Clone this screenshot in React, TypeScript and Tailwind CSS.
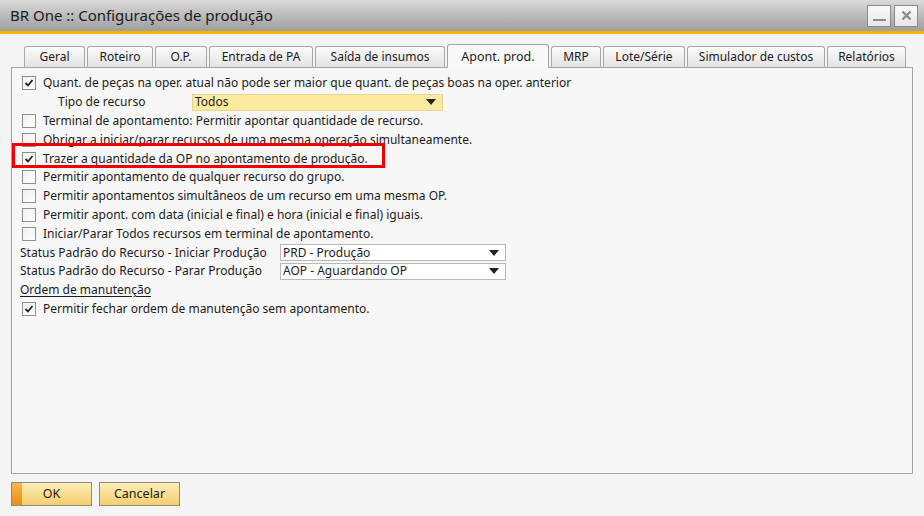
import React from "react";

const font = { fontFamily: '"Noto Sans", "Open Sans", sans-serif' };

function Check({ checked }: { checked?: boolean }) {
  return (
    <span className="flex h-[14px] w-[14px] shrink-0 items-center justify-center border border-[#8e8f8f] bg-gradient-to-br from-[#f0f0f0] to-white">
      {checked && (
        <svg width="10" height="10" viewBox="0 0 10 10">
          <path d="M1.5 5 L4 7.5 L8.5 2" fill="none" stroke="#222" strokeWidth="1.8" />
        </svg>
      )}
    </span>
  );
}

function Row({ checked, children }: { checked?: boolean; children: React.ReactNode }) {
  return (
    <div className="flex h-[18.8px] items-center gap-[7px] pl-[10px]">
      <Check checked={checked} />
      <span className="whitespace-nowrap">{children}</span>
    </div>
  );
}

function Combo({ value, width, yellow }: { value: string; width: string; yellow?: boolean }) {
  return (
    <div
      className={`flex h-[17px] shrink-0 items-center justify-between border pl-[2px] pr-[6px] ${width} ${
        yellow ? "border-[#e8d68c] bg-[#fcea9f]" : "border-[#b9b9b9] bg-white"
      }`}
    >
      <span>{value}</span>
      <svg width="10" height="6" viewBox="0 0 10 6">
        <path d="M0 0 H10 L5 6 Z" fill="#222" />
      </svg>
    </div>
  );
}

const tabs = [
  { label: "Geral", w: "w-[61px]" },
  { label: "Roteiro", w: "w-[66px]" },
  { label: "O.P.", w: "w-[52px]" },
  { label: "Entrada de PA", w: "w-[104px]" },
  { label: "Saída de insumos", w: "w-[130px]" },
  { label: "Apont. prod.", w: "w-[102px]", active: true },
  { label: "MRP", w: "w-[50px]" },
  { label: "Lote/Série", w: "w-[82px]" },
  { label: "Simulador de custos", w: "w-[138px]" },
  { label: "Relatórios", w: "w-[79px]" },
];

export default function App() {
  return (
    <div className="flex h-[516px] w-[924px] flex-col bg-[#f4f4f4] text-[12px] text-[#1c1c1c]" style={font}>
      {/* title bar */}
      <div className="flex h-[31px] items-center justify-between bg-gradient-to-b from-[#dadada] to-[#9e9e9e] pl-[10px] pr-[6px]">
        <span className="text-[15px] text-[#1a1a1a]">BR One :: Configurações de produção</span>
        <div className="flex gap-[3px]">
          <div className="flex h-[22px] w-[24px] items-end justify-center border border-[#8a8a8a] bg-gradient-to-b from-[#fbfbfb] to-[#e6e6e6] pb-[5px]">
            <span className="block h-[2px] w-[13px] bg-[#8c8c8c]" />
          </div>
          <div className="flex h-[22px] w-[24px] items-center justify-center border border-[#8a8a8a] bg-gradient-to-b from-[#fbfbfb] to-[#e6e6e6]">
            <svg width="11" height="11" viewBox="0 0 11 11">
              <path d="M1.5 1.5 L9.5 9.5 M9.5 1.5 L1.5 9.5" stroke="#8c8c8c" strokeWidth="2.4" />
            </svg>
          </div>
        </div>
      </div>
      <div className="h-[3px] bg-[#f4b400]" />

      <div className="flex flex-1 flex-col px-[11px] pt-[10px]">
        {/* tabs */}
        <div className="relative z-10 flex h-[23px] items-end gap-[2px] pl-[13px]">
          {tabs.map((t) =>
            t.active ? (
              <div
                key={t.label}
                className={`flex h-[24px] ${t.w} mb-[-1px] items-center justify-center rounded-t-[3px] border border-b-0 border-[#a3a3a3] bg-[#f8f8f8] pt-[1px] text-[12.5px]`}
              >
                {t.label}
              </div>
            ) : (
              <div
                key={t.label}
                className={`flex h-[21px] ${t.w} items-center justify-center rounded-t-[3px] border border-b-0 border-[#a8a8a8] bg-gradient-to-b from-[#fbfbfb] to-[#e3e3e3]`}
              >
                {t.label}
              </div>
            )
          )}
        </div>

        {/* panel */}
        <div className="flex h-[407px] flex-col border border-[#a3a3a3] bg-[#f7f7f7] pt-[6px]">
          <Row checked>Quant. de peças na oper. atual não pode ser maior que quant. de peças boas na oper. anterior</Row>
          <div className="flex h-[18.8px] items-center pl-[46px]">
            <span className="w-[134px] shrink-0">Tipo de recurso</span>
            <Combo value="Todos" width="w-[251px]" yellow />
          </div>
          <Row>Terminal de apontamento: Permitir apontar quantidade de recurso.</Row>
          <Row>Obrigar a iniciar/parar recursos de uma mesma operação simultaneamente.</Row>
          <div className="relative">
            <div className="pointer-events-none absolute left-[0px] top-[-6px] h-[25px] w-[373px] border-[3px] border-[#ee0000]" />
            <Row checked>Trazer a quantidade da OP no apontamento de produção.</Row>
          </div>
          <Row>Permitir apontamento de qualquer recurso do grupo.</Row>
          <Row>Permitir apontamentos simultâneos de um recurso em uma mesma OP.</Row>
          <Row>Permitir apont. com data (inicial e final) e hora (inicial e final) iguais.</Row>
          <Row>Iniciar/Parar Todos recursos em terminal de apontamento.</Row>
          <div className="flex h-[18.8px] items-center pl-[8px]">
            <span className="w-[260px] shrink-0 whitespace-nowrap">Status Padrão do Recurso - Iniciar Produção</span>
            <Combo value="PRD - Produção" width="w-[226px]" />
          </div>
          <div className="flex h-[18.8px] items-center pl-[8px]">
            <span className="w-[260px] shrink-0 whitespace-nowrap">Status Padrão do Recurso - Parar Produção</span>
            <Combo value="AOP - Aguardando OP" width="w-[226px]" />
          </div>
          <div className="flex h-[18.8px] items-center pl-[8px]">
            <span className="underline underline-offset-2">Ordem de manutenção</span>
          </div>
          <Row checked>Permitir fechar ordem de manutenção sem apontamento.</Row>
        </div>

        {/* buttons */}
        <div className="flex gap-[7px] pt-[8px]">
          <button className="relative h-[24px] w-[81px] overflow-hidden border border-[#8b8b8b] bg-gradient-to-b from-[#fcedb8] to-[#f5ce6a] text-[12.5px]">
            <span className="absolute left-0 top-0 h-full w-[10px] bg-gradient-to-b from-[#f8b84a] to-[#ec8c10]" />
            <span className="relative">OK</span>
          </button>
          <button className="h-[24px] w-[81px] border border-[#8b8b8b] bg-gradient-to-b from-[#fcedb8] to-[#f5ce6a] text-[12.5px]">
            Cancelar
          </button>
        </div>
      </div>
    </div>
  );
}
